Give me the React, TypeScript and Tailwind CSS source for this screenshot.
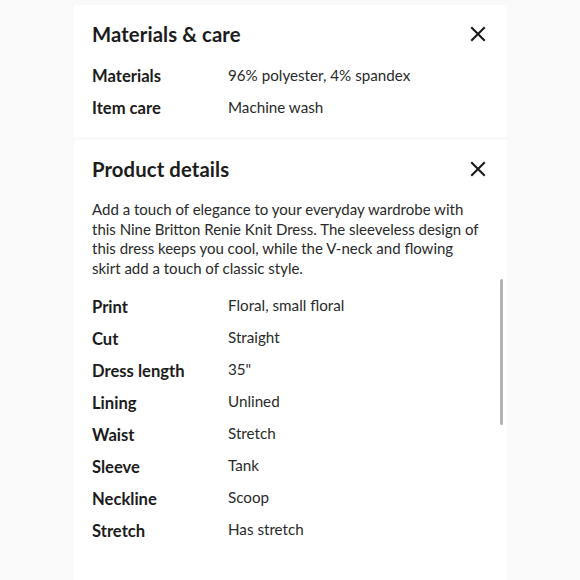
const materials = [
  { label: "Materials", value: "96% polyester, 4% spandex" },
  { label: "Item care", value: "Machine wash" },
];

const details = [
  { label: "Print", value: "Floral, small floral" },
  { label: "Cut", value: "Straight" },
  { label: "Dress length", value: '35"' },
  { label: "Lining", value: "Unlined" },
  { label: "Waist", value: "Stretch" },
  { label: "Sleeve", value: "Tank" },
  { label: "Neckline", value: "Scoop" },
  { label: "Stretch", value: "Has stretch" },
];

function CloseIcon() {
  return (
    <svg width="16" height="16" viewBox="0 0 16 16" fill="none" stroke="#1a1a1a" strokeWidth="2.1" strokeLinecap="square">
      <path d="M2 2 L14 14 M14 2 L2 14" />
    </svg>
  );
}

function Header({ title }: { title: string }) {
  return (
    <div className="flex items-center justify-between h-[28px]">
      <h2 className="text-[20.3px] font-bold text-[#1c1c1c] tracking-[0.1px]">{title}</h2>
      <div className="mr-[3px]">
        <CloseIcon />
      </div>
    </div>
  );
}

function Row({ label, value }: { label: string; value: string }) {
  return (
    <div className="flex items-center h-[32px]">
      <div className="w-[136px] text-[16.6px] font-bold text-[#1c1c1c] pt-[1px]">{label}</div>
      <div className="text-[15.2px] text-[#2a2a2a] pb-[2px]">{value}</div>
    </div>
  );
}

export default function App() {
  return (
    <div
      className="w-[580px] h-[580px] overflow-hidden bg-[#f9f9f9] flex flex-col pt-[5px] pl-[74px]"
      style={{ fontFamily: "Lato, 'Open Sans', sans-serif" }}
    >
      {/* Materials & care */}
      <section className="w-[433px] bg-white px-[18px] pt-[15px] pb-[13px]">
        <Header title="Materials & care" />
        <div className="mt-[12px]">
          {materials.map((r) => (
            <Row key={r.label} {...r} />
          ))}
        </div>
      </section>

      {/* Product details */}
      <section className="relative w-[433px] flex-1 bg-white mt-[3px] px-[18px] pt-[15px]">
        <Header title="Product details" />
        <p className="mt-[17px] text-[15px] leading-[19.7px] text-[#2a2a2a] pr-[6px]">
          Add a touch of elegance to your everyday wardrobe with this Nine Britton Renie Knit Dress. The sleeveless
          design of this dress keeps you cool, while the V-neck and flowing skirt add a touch of classic style.
        </p>
        <div className="mt-[12px]">
          {details.map((r) => (
            <Row key={r.label} {...r} />
          ))}
        </div>
        <div className="absolute right-[4px] top-[139px] w-[3px] h-[146px] rounded-full bg-[#b3b3b3]" />
      </section>
    </div>
  );
}
